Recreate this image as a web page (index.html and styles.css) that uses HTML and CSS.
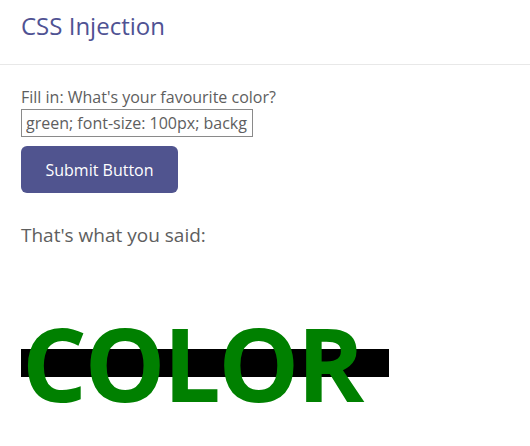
FILE: index.html
```html
<!DOCTYPE html>
<html>
<head>
<meta charset="utf-8">
<link rel="stylesheet" href="styles.css">
</head>
<body>
<header class="header">
  <h1 class="title">CSS Injection</h1>
</header>
<main class="content">
  <form class="form">
    <label class="label" for="color">Fill in: What's your favourite color?</label>
    <input class="input" id="color" type="text" value="green; font-size: 100px; background: black">
    <button class="button" type="button">Submit Button</button>
  </form>
  <p class="said">That's what you said:</p>
  <div class="result"><span class="result-text">COLOR</span></div>
</main>
</body>
</html>
```
FILE: styles.css
```css
* { box-sizing: border-box; }
html, body { margin: 0; padding: 0; background: #fff; }
body {
  font-family: "Open Sans", "Noto Sans", sans-serif;
  color: #5a5a5a;
  min-height: 446px;
}
.header {
  height: 65px;
  border-bottom: 1px solid #e8e8e8;
  padding: 0 21px;
}
.title {
  margin: 0;
  padding-top: 9px;
  font-size: 24px;
  font-weight: 400;
  line-height: 34px;
  color: #4f5293;
}
.content {
  padding: 21px 21px 0;
}
.form {
  display: flex;
  flex-direction: column;
  align-items: flex-start;
}
.label {
  font-size: 16px;
  line-height: 22px;
  color: #5e5e5e;
}
.input {
  margin-top: 1px;
  width: 232px;
  height: 28px;
  border: 1px solid #8a8a8a;
  padding: 0 4px;
  font-family: inherit;
  font-size: 16px;
  color: #5e5e5e;
  border-radius: 0;
}
.button {
  margin-top: 9px;
  width: 157px;
  height: 47px;
  background: #50548f;
  color: #fff;
  border: none;
  border-radius: 6px;
  font-family: inherit;
  font-size: 16px;
}
.said {
  margin: 30px 0 0;
  font-size: 19px;
  line-height: 24px;
  color: #5e5e5e;
}
.result {
  margin-top: 102px;
  width: 368px;
  height: 28px;
  background: #000;
  line-height: 28px;
  white-space: nowrap;
}
.result-text {
  font-size: 102px;
  font-weight: 700;
  color: #008000;
  margin-left: 1px;
  letter-spacing: -2.5px;
  vertical-align: -2px;
}
```
